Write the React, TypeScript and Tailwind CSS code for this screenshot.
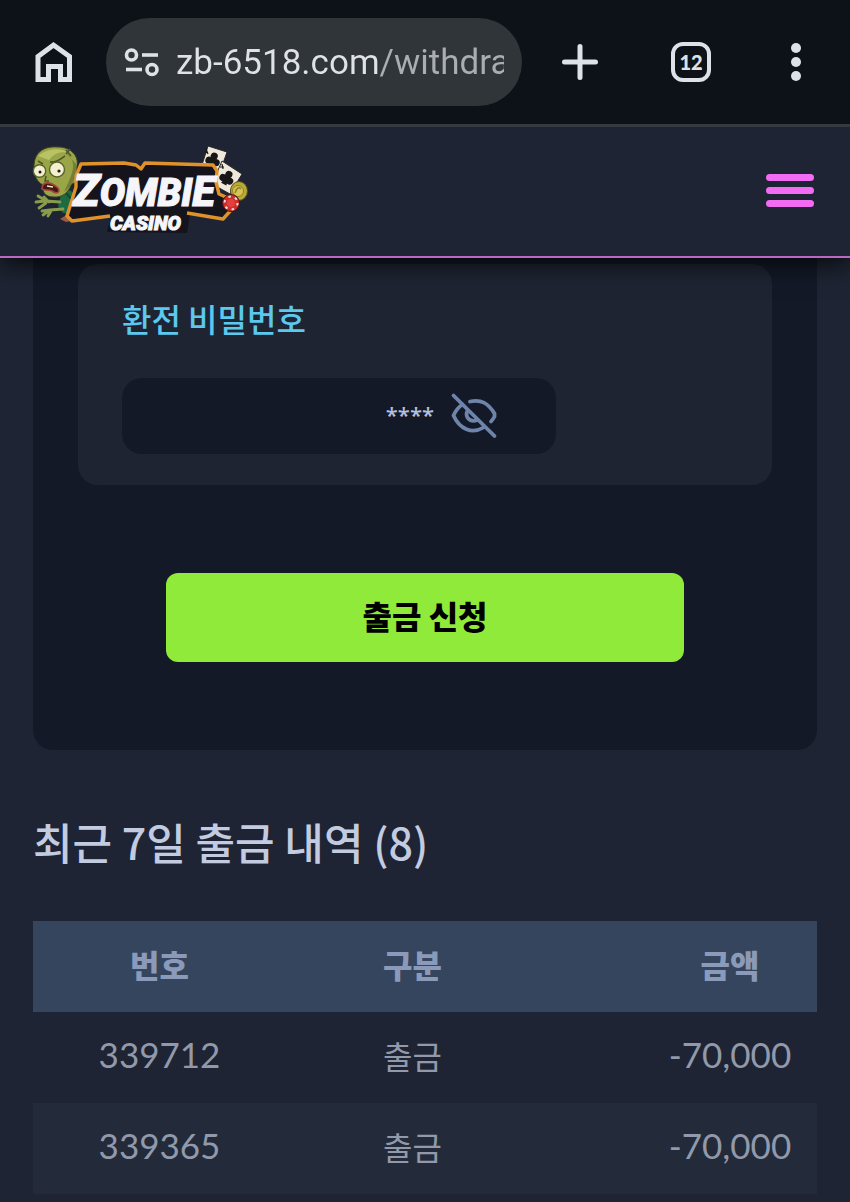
import React, { useState } from "react";
import clsx from "clsx";

interface Withdrawal {
  id: string;
  kind: string;
  amount: string;
}

const WITHDRAWALS: Withdrawal[] = [
  { id: "339712", kind: "출금", amount: "-70,000" },
  { id: "339365", kind: "출금", amount: "-70,000" },
];

const TOTAL_COUNT = 8;

function HomeIcon() {
  return (
    <svg width="40" height="44" viewBox="0 0 40 44" fill="none" stroke="#dde2e8" strokeWidth="5">
      <path d="M4 39.500V16.500L19.500 5 35.500 16.500V39.500H26.500V26.500H14.500V39.500Z" />
    </svg>
  );
}

function TuneIcon() {
  return (
    <svg width="36" height="30" viewBox="0 0 36 30" fill="none" stroke="#dde2e8" strokeWidth="3.600">
      <circle cx="7.500" cy="8" r="5" />
      <path d="M18 8H34" />
      <path d="M2 22.500H18" />
      <circle cx="28" cy="22.500" r="5" />
    </svg>
  );
}

function EyeOffIcon() {
  return (
    <svg
      width="48"
      height="48"
      viewBox="0 0 48 48"
      fill="none"
      stroke="#6f84ab"
      strokeWidth="3.800"
      strokeLinecap="round"
      strokeLinejoin="round"
    >
      <path d="M3.500 3.500 44.500 44" />
      <path d="M20 9.500C31 7 38 11 44.500 21.500V24.500C43.500 26.500 42 28.500 41 29.500" />
      <path d="M12.500 12.500C8.500 15 5.500 19 3.500 23.500C9.500 37 22 42.500 33.500 35.500" />
      <path d="M17.500 18.500C14.500 25 20 31 27.500 28" />
    </svg>
  );
}

function Club() {
  return (
    <g>
      <circle cx="0" cy="-4" r="3.600" />
      <circle cx="-3.800" cy="1.500" r="3.600" />
      <circle cx="3.800" cy="1.500" r="3.600" />
      <path d="M-1-2H1L3 7H-3Z" />
    </g>
  );
}

function Logo() {
  return (
    <svg width="222" height="96" viewBox="30 143 222 96" role="img" aria-label="Zombie Casino">
      {/* playing cards and chips */}
      <path d="M208 146 227 152 219 175 201 168Z" fill="#efe9dc" stroke="#2a2626" strokeWidth="1" />
      <g transform="translate(213 160) rotate(18)" fill="#171717">
        <Club />
      </g>
      <path d="M206 149l2 5m-3-2l3 1" stroke="#171717" strokeWidth="1.200" />
      <path d="M222 161 242 174 230 194 212 184Z" fill="#efe9dc" stroke="#2a2626" strokeWidth="1" />
      <g transform="translate(227 178) rotate(28)" fill="#171717">
        <Club />
      </g>
      <path d="M222 164l1 5m-3-2l4 0" stroke="#171717" strokeWidth="1.200" />
      <ellipse cx="239" cy="191" rx="8.500" ry="9.500" fill="#b9a936" stroke="#524c17" strokeWidth="1" />
      <circle cx="238" cy="191" r="5.500" fill="#d5c654" stroke="#8e8125" strokeWidth="1" />
      <path d="M235 193c2-6 4-6 6-4" fill="none" stroke="#8e8125" strokeWidth="1.500" />

      {/* shirt and hands */}
      <path d="M61 195 70 190 79 198 73 214 63 213 58 206Z" fill="#1c6b43" />
      <path d="M66 193 73 201 70 213" fill="none" stroke="#0f4a30" strokeWidth="2" />
      <path d="M60 219 68 214 72 221 66 222Z" fill="#9a5b45" />
      <g fill="none" stroke="#8a9c4c" strokeWidth="2.800" strokeLinecap="round" strokeLinejoin="round">
        <path d="M60 202 46 201 38 196M45 201 36 202M46 203 39 208M49 202 44 197" />
        <path d="M63 209 50 210 42 211M50 210 43 215M51 211 48 216" />
      </g>
      {/* head */}
      <path
        d="M34 167C34 151 45 146 58 147 71 147 79 156 77 166 76 171 76 175 78 178 77 184 73 182 71 185 69 192 62 198 54 197 45 197 42 192 43 185 37 182 34 176 34 167Z"
        fill="#9aa548"
        stroke="#3a4520"
        strokeWidth="1"
      />
      <path d="M38 156C47 148 61 147 69 153 61 151 54 153 49 160Z" fill="#b9c265" />
      <path d="M66 153C76 160 74 170 69 181L64 192C72 187 78 176 76 164Z" fill="#727f35" />
      <path d="M38 161 43 164M50 162C56 163 61 159 65 156M66 150l5 6M70 149l-4 5" fill="none" stroke="#4c5725" strokeWidth="1.600" />
      <circle cx="39.500" cy="171" r="6.200" fill="#f3efd0" stroke="#58632c" strokeWidth="1.400" />
      <circle cx="57" cy="169.500" r="7.500" fill="#f3efd0" stroke="#58632c" strokeWidth="1.400" />
      <circle cx="40" cy="172" r="1.500" fill="#1b1b12" />
      <circle cx="59" cy="171" r="1.600" fill="#1b1b12" />
      <path d="M46 176 45 181 49 181" fill="none" stroke="#4c5725" strokeWidth="1.500" />
      <path d="M42 189C42 181 50 181 58 188 61 193 56 194 52 191 48 189 45 191 42 189Z" fill="#461818" stroke="#a2463c" strokeWidth="1.600" />
      <path d="M47 186 53 187" stroke="#ede3b4" strokeWidth="1.500" />

      {/* word mark plate */}
      <path
        d="M79 164 124 163 136 165 141 169 145 163 213 165 217 171 216 182 219 194 225 200 232 209 223 219 190 214 187 233 107 232 111 216 72 222 67 217 75 190Z"
        fill="#15141d"
        strokeLinejoin="round"
      />
      <path
        d="M110 216 72 221 67 216 76 187 76 176 81 164 124 163 136 165 141 169 145 163 213 165 217 171 216 182 219 194 228 198 232 209 223 219 187 213"
        fill="none"
        stroke="#e0922a"
        strokeWidth="3.400"
        strokeLinejoin="round"
      />
      <circle cx="231" cy="203" r="8.500" fill="#cf2e2c" stroke="#4c1514" strokeWidth="1" />
      <circle cx="231" cy="203" r="6.500" fill="none" stroke="#f1dcd6" strokeWidth="2" strokeDasharray="2.500 4.300" />
      <circle cx="231" cy="203" r="4" fill="#e2413b" />
      <g
        fill="#f6f6fa"
        stroke="#f6f6fa"
        strokeWidth="1"
        fontFamily="Roboto, sans-serif"
        fontWeight="900"
        fontStyle="italic"
      >
        <text x="73" y="206" fontSize="38">
          <tspan fontSize="45">Z</tspan>OMBI<tspan fontSize="42">E</tspan>
        </text>
        <text x="110" y="230" fontSize="20">CASINO</text>
      </g>
    </svg>
  );
}

function BrowserBar() {
  return (
    <div className="relative z-20 flex h-[127px] items-center border-b-[3px] border-[#343a42] bg-[#0d1218] pl-[34px] pr-[49px]">
      <button type="button" aria-label="Home" className="shrink-0">
        <HomeIcon />
      </button>
      <div className="ml-8 flex h-[88px] min-w-0 flex-1 items-center rounded-full bg-[#2f3538] px-[18px]">
        <TuneIcon />
        <input
          type="text"
          aria-label="Address"
          readOnly
          value="zb-6518.com/withdrawal"
          className="ml-4 min-w-0 flex-1 bg-[linear-gradient(90deg,#dfe3e7_203px,#a9aeb3_203px)] bg-clip-text pt-[2px] font-['Roboto',sans-serif] text-[35px] leading-[48px] text-transparent outline-none"
        />
      </div>
      <button type="button" aria-label="New tab" className="ml-10 shrink-0">
        <svg width="36" height="36" viewBox="0 0 36 36" stroke="#dde2e8" strokeWidth="5" strokeLinecap="round">
          <path d="M2.500 18H33.500M18 2.500V33.500" />
        </svg>
      </button>
      <button
        type="button"
        aria-label="Tabs"
        className="ml-[73px] flex size-10 shrink-0 items-center justify-center rounded-xl border-4 border-[#dde2e8] font-['Lato',sans-serif] text-xl font-black text-[#dde2e8]"
      >
        12
      </button>
      <button type="button" aria-label="More" className="ml-20 flex shrink-0 flex-col gap-1">
        <span className="size-[10px] rounded-full bg-[#dde2e8]" />
        <span className="size-[10px] rounded-full bg-[#dde2e8]" />
        <span className="size-[10px] rounded-full bg-[#dde2e8]" />
      </button>
    </div>
  );
}

function SiteHeader() {
  return (
    <header className="relative z-10 flex h-[131px] items-center justify-between border-b-2 border-[#b968c4] bg-[#1e2433] pb-[2px] pl-[30px] pr-9 shadow-[0_6px_24px_rgba(0,0,0,0.75)]">
      <a href="#">
        <Logo />
      </a>
      <button type="button" aria-label="Menu" className="flex w-12 flex-col gap-[6px]">
        <span className="h-[7px] rounded-full bg-[#f26bf3]" />
        <span className="h-[7px] rounded-full bg-[#f26bf3]" />
        <span className="h-[7px] rounded-full bg-[#f26bf3]" />
      </button>
    </header>
  );
}

function WithdrawForm() {
  const [pin, setPin] = useState("****");

  return (
    <form
      onSubmit={(e) => e.preventDefault()}
      className="rounded-b-[20px] bg-[#131927] px-[45px] pb-[88px] pt-[6px]"
    >
      <div className="rounded-[20px] bg-[#1e2432] px-11 pb-[31px] pt-[30px]">
        <label htmlFor="pin" className="block text-[32px] font-medium leading-[48px] text-[#5cc8ee]">
          환전 비밀번호
        </label>
        <div className="mt-9 flex h-[76px] w-[434px] max-w-full items-center rounded-[20px] bg-[#131927] pr-[58px]">
          <input
            id="pin"
            type="text"
            value={pin}
            onChange={(e) => setPin(e.target.value)}
            className="min-w-0 flex-1 pb-1 text-right font-['Open_Sans',sans-serif] text-[22px] font-semibold text-[#b4bfdb] outline-none"
          />
          <button type="button" aria-label="Show password" className="ml-4">
            <EyeOffIcon />
          </button>
        </div>
      </div>
      <div className="mt-[88px] px-[88px]">
        <button
          type="submit"
          className="h-[89px] w-full rounded-xl bg-[#8fea3a] pb-[6px] text-[32px] font-black text-black"
        >
          출금 신청
        </button>
      </div>
    </form>
  );
}

function HistoryTable() {
  return (
    <table className="mt-12 w-full table-fixed text-center">
      <thead>
        <tr className="h-[91px] bg-[#35455e] text-[32px] text-[#8a9ab8]">
          <th className="w-[253px] pb-[6px] font-black">번호</th>
          <th className="w-[253px] pb-[6px] font-black">구분</th>
          <th className="pb-[6px] pl-[104px] font-black">금액</th>
        </tr>
      </thead>
      <tbody>
        {WITHDRAWALS.map((row, i) => (
          <tr
            key={row.id}
            className={clsx("h-[91px] text-[#9199aa]", i % 2 === 1 && "bg-[#232b3b]")}
          >
            <td className="pb-[6px] font-['Lato',sans-serif] text-[35px]">{row.id}</td>
            <td className="pb-[6px] text-[32px]">{row.kind}</td>
            <td className="pb-[6px] pl-[104px] font-['Lato',sans-serif] text-[35px]">{row.amount}</td>
          </tr>
        ))}
      </tbody>
    </table>
  );
}

export default function App() {
  return (
    <div className="min-h-screen bg-[#1e2433] font-['Noto_Sans_CJK_KR',sans-serif]">
      <BrowserBar />
      <SiteHeader />
      <main className="px-[33px]">
        <WithdrawForm />
        <h2 className="mt-[59px] text-[43px] font-medium leading-[64px] text-[#c3cbe0]">
          최근 7일 출금 내역 ({TOTAL_COUNT})
        </h2>
        <HistoryTable />
      </main>
    </div>
  );
}
